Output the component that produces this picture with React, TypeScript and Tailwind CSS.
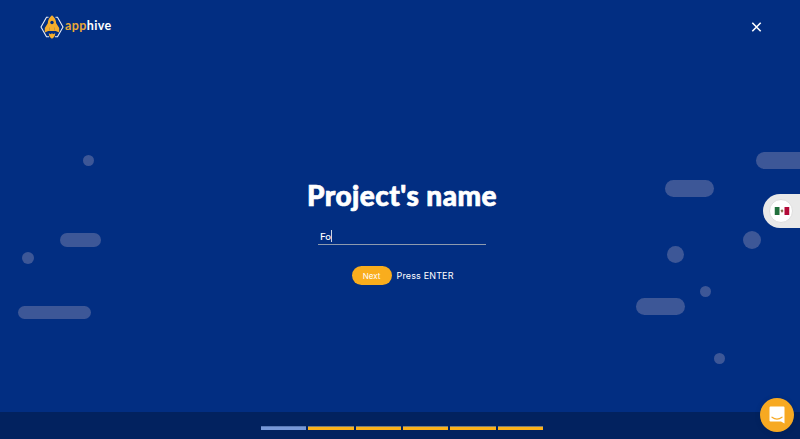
const shapes = [
  'left-[83px] top-[155px] h-[11px] w-[11px]',
  'left-[60px] top-[233px] h-[14px] w-[41px]',
  'left-[22px] top-[252px] h-[12px] w-[12px]',
  'left-[18px] top-[306px] h-[13px] w-[73px]',
  'left-[756px] top-[152px] h-[17px] w-[60px]',
  'left-[665px] top-[180px] h-[17px] w-[49px]',
  'left-[743px] top-[231px] h-[18px] w-[18px]',
  'left-[667px] top-[246px] h-[17px] w-[17px]',
  'left-[700px] top-[286px] h-[11px] w-[11px]',
  'left-[636px] top-[298px] h-[17px] w-[49px]',
  'left-[714px] top-[353px] h-[11px] w-[11px]',
];

function Logo() {
  return (
    <div className="flex h-6 items-center">
      <svg width="24" height="24" viewBox="0 0 24 24" fill="none">
        <path d="M8.500 2.300h-2L1 12l5.500 9.700H9M15.500 2.300h2L23 12l-5.500 9.700H15" stroke="#e8edf6" strokeWidth="1.100" />
        <path d="M12 .2C9.300 2.300 7.900 5 7.800 8.200L4.800 13v4.600l3.500-1.600h7.400l3.500 1.600V13l-3-4.800C16.100 5 14.700 2.300 12 .2Z" fill="#f6ae2d" />
        <circle cx="12" cy="7.500" r="1.700" fill="#022e82" />
        <path d="M9.500 12.500v3M14.500 12.500v3" stroke="#ab8646" strokeWidth=".6" />
        <path d="m8.800 18.300 2.200 1 1-1.300 1 1.300 2.200-1c.1 2.400-1.200 4.200-3.200 5.500-2-1.300-3.300-3.100-3.200-5.500Z" fill="#f6ae2d" />
      </svg>
      <span className="-mt-[3px] ml-[1px] font-['Lato',sans-serif] text-[12.5px] leading-4 font-bold tracking-[0.4px] text-white">
        <span className="text-[#eaa936]">app</span>hive
      </span>
    </div>
  );
}

function Flag() {
  return (
    <div className="absolute top-[194px] right-0 flex h-[34px] w-[37px] items-center rounded-l-full bg-[#e9e9e9] pl-[6px]">
      <div className="flex h-6 w-6 items-center justify-center rounded-full border border-[#dedede] bg-white">
        <svg className="translate-x-[0.5px]" width="15" height="8" viewBox="0 0 15 8">
          <path d="M0 0h5v8H0Z" fill="#22703d" />
          <path d="M10 0h5v8h-5Z" fill="#b40b39" />
          <path d="M6 3.500 7 2.500h1.300l.7 1.500L8 5.500H7Z" fill="#a88765" />
          <path d="M7 3h1v1.500H7Z" fill="#665232" />
        </svg>
      </div>
    </div>
  );
}

export default function App() {
  return (
    <div className="relative flex h-[439px] w-full flex-col overflow-hidden bg-[#022e82] font-['Inter',sans-serif] text-white">
      <div aria-hidden="true">
        {shapes.map((shape) => (
          <span key={shape} className={`absolute rounded-full bg-[#3d5797] ${shape}`} />
        ))}
      </div>
      <header className="flex h-[54px] items-center justify-between pr-[38px] pl-10">
        <Logo />
        <button aria-label="Close">
          <svg width="11" height="10" viewBox="0 0 11 10" fill="none" stroke="white" strokeWidth="1.600">
            <path d="m1.300.8 8.400 8.400M9.700.8 1.300 9.200" />
          </svg>
        </button>
      </header>
      <main className="flex flex-1 flex-col items-center pt-[122px] pl-[4px]">
        <h1 className="font-['Lato',sans-serif] text-[28px] leading-[38px] font-black tracking-[0.46px] whitespace-nowrap [-webkit-text-stroke:0.7px_white]">Project's name</h1>
        <div className="mt-[14px] flex h-[17px] w-[168px] items-start border-b border-[#8d9aae] pl-[2px]">
          <span className="font-['Lato',sans-serif] text-[10px] leading-4 font-medium">Fo</span>
          <span className="mt-[2px] h-3 w-px bg-white/80" />
        </div>
        <div className="mt-[21px] flex items-center gap-[5px] pl-[2px]">
          <button className="h-[19px] w-10 rounded-full bg-[#f9ad1d] text-[8px] leading-[20px]">Next</button>
          <span className="w-[58px] text-[9px] leading-[19px] tracking-[0.15px] whitespace-nowrap">Press ENTER</span>
        </div>
      </main>
      <footer className="flex h-[27px] justify-center bg-[#02225f] pt-[14px] pl-[4px]">
        <div className="flex w-[282px] gap-[2px]">
          <span className="h-[4px] flex-1 border-t border-[#5979b6] bg-[#7798d8]" />
          {[1, 2, 3, 4, 5].map((step) => (
            <span key={step} className="h-[4px] flex-1 border-t border-[#7a7d78] bg-[#fcb21a]" />
          ))}
        </div>
      </footer>
      <Flag />
      <button aria-label="Open chat" className="absolute top-[398px] left-[760px] flex h-[34px] w-[34px] items-center justify-center rounded-full bg-[#f7a922] shadow-[0_1px_5px_#001a4c55]">
        <svg width="16" height="18" viewBox="0 0 16 18" fill="none">
          <path d="M1.500.500h13a1 1 0 0 1 1 1v16l-3.500-2H1.500a1 1 0 0 1-1-1v-13a1 1 0 0 1 1-1Z" fill="white" />
          <path d="M3 11.200c3 2.200 7 2.200 10 0" stroke="#f7a922" strokeWidth="1.200" strokeLinecap="round" />
        </svg>
      </button>
    </div>
  );
}
